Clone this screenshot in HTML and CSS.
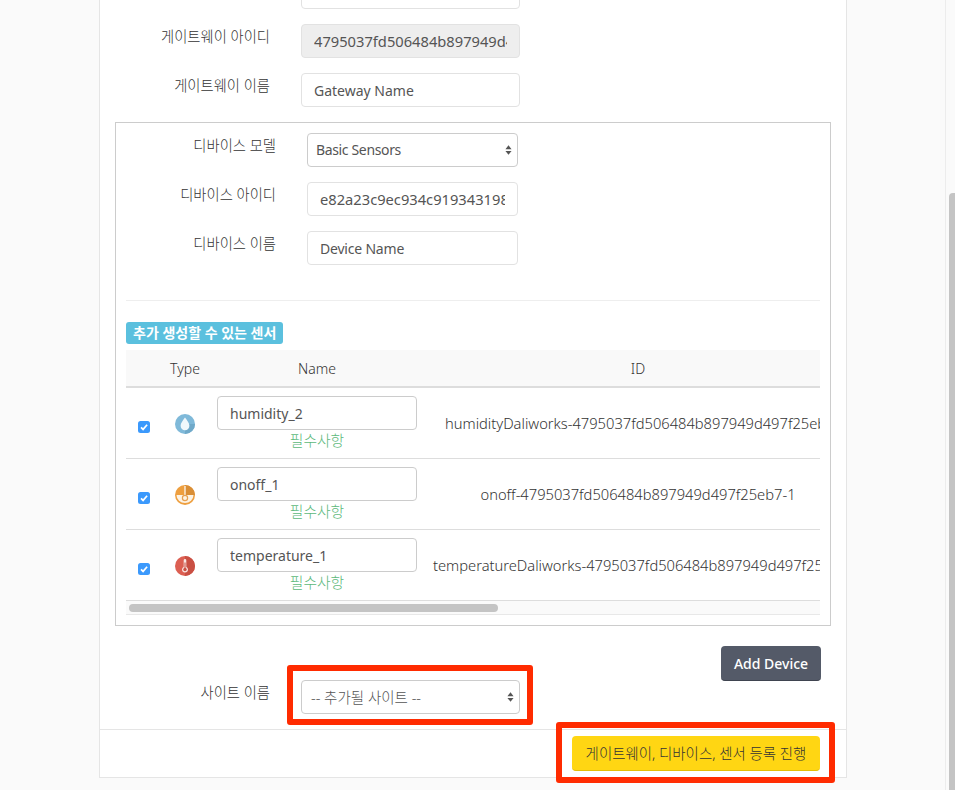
FILE: index.html
```html
<!DOCTYPE html>
<html lang="ko">
<head>
<meta charset="utf-8">
<title>게이트웨이 등록</title>
<link rel="stylesheet" href="styles.css">
</head>
<body>
<div class="page">
  <main class="card">
    <div class="card-body">
      <div class="form-row"><div class="form-label"></div><input class="field" type="text" value=""></div>
      <div class="form-row"><label class="form-label">게이트웨이 아이디</label><input class="field field-readonly field-id" type="text" readonly value="4795037fd506484b897949d497f25eb7"></div>
      <div class="form-row"><label class="form-label">게이트웨이 이름</label><input class="field" type="text" value="Gateway Name"></div>

      <section class="device-box">
        <div class="device-fields">
          <div class="form-row"><label class="form-label">디바이스 모델</label>
            <div class="select-wrap">
              <div class="field select-field">Basic Sensors</div>
              <svg class="select-arrows" width="7" height="12" viewBox="0 0 8 12"><path d="M4 0.5 7.5 5H.5zM4 11.5 .5 7h7z" fill="#555"/></svg>
            </div>
          </div>
          <div class="form-row"><label class="form-label">디바이스 아이디</label><input class="field field-id" type="text" value="e82a23c9ec934c91934319836fa1b2c4"></div>
          <div class="form-row"><label class="form-label">디바이스 이름</label><input class="field field-device-name" type="text" value="Device Name"></div>
        </div>
        <hr class="divider">
        <div class="badge-row"><span class="badge">추가 생성할 수 있는 센서</span></div>
        <div class="table-clip">
          <table class="sensors">
            <colgroup><col class="col-check"><col class="col-type"><col class="col-name"><col class="col-id"></colgroup>
            <thead>
              <tr><th></th><th>Type</th><th>Name</th><th>ID</th></tr>
            </thead>
            <tbody>
              <tr>
                <td class="cell-check"><span class="check"><svg width="12" height="12" viewBox="0 0 12 12"><path d="M3 6.3 5.1 8.4 9.1 3.8" fill="none" stroke="#fff" stroke-width="1.7"/></svg></span></td>
                <td class="cell-icon">
                  <svg width="20" height="20" viewBox="0 0 20 20"><circle cx="10" cy="10" r="10" fill="#7fb9d9"/><path d="M10 10V20A10 10 0 0 0 20 10Z" fill="#6fa9c9"/><path d="M10 3.6C12.4 7 14.4 9.3 14.4 11.8A4.4 4.4 0 0 1 5.6 11.8C5.6 9.3 7.6 7 10 3.6Z" fill="#f1f8fb"/></svg>
                </td>
                <td><input class="field field-name" type="text" value="humidity_2"><div class="required">필수사항</div></td>
                <td class="cell-id cell-id-humidity">humidityDaliworks-4795037fd506484b897949d497f25eb7-2</td>
              </tr>
              <tr>
                <td class="cell-check"><span class="check"><svg width="12" height="12" viewBox="0 0 12 12"><path d="M3 6.3 5.1 8.4 9.1 3.8" fill="none" stroke="#fff" stroke-width="1.7"/></svg></span></td>
                <td class="cell-icon">
                  <svg width="20" height="20" viewBox="0 0 20 20"><circle cx="10" cy="10" r="10" fill="#ee9f3f"/><path d="M10 0A10 10 0 0 1 20 10H10Z" fill="#d98e36"/><path d="M1.5 10H18.5A8.5 8 0 0 1 1.5 10Z" fill="#fdf3e4"/><rect x="9.4" y="1" width="1.2" height="9" fill="#fff"/><circle cx="10" cy="13" r="2.6" fill="none" stroke="#e6a050" stroke-width="1.2"/></svg>
                </td>
                <td><input class="field field-name" type="text" value="onoff_1"><div class="required">필수사항</div></td>
                <td class="cell-id">onoff-4795037fd506484b897949d497f25eb7-1</td>
              </tr>
              <tr>
                <td class="cell-check"><span class="check"><svg width="12" height="12" viewBox="0 0 12 12"><path d="M3 6.3 5.1 8.4 9.1 3.8" fill="none" stroke="#fff" stroke-width="1.7"/></svg></span></td>
                <td class="cell-icon">
                  <svg width="20" height="20" viewBox="0 0 20 20"><circle cx="10" cy="10" r="10" fill="#dc5f52"/><path d="M10 0A10 10 0 0 1 10 20Z" fill="#c94f43"/><path d="M8.7 4.3A1.3 1.3 0 0 1 11.3 4.3V10.9A3 3 0 1 1 8.7 10.9Z" fill="#f9e6e2"/><rect x="9.5" y="6.5" width="1" height="6" fill="#c94f43"/><circle cx="10" cy="13.5" r="1.7" fill="#c94f43"/></svg>
                </td>
                <td><input class="field field-name" type="text" value="temperature_1"><div class="required">필수사항</div></td>
                <td class="cell-id cell-id-temperature">temperatureDaliworks-4795037fd506484b897949d497f25eb7-1</td>
              </tr>
            </tbody>
          </table>
        </div>
        <div class="h-scroll"><div class="h-thumb"></div></div>
      </section>

      <div class="add-row"><button class="btn btn-dark" type="button">Add Device</button></div>

      <div class="form-row form-row-last"><label class="form-label">사이트 이름</label>
        <div class="select-wrap">
          <div class="field select-field select-site">-- 추가될 사이트 --</div>
          <svg class="select-arrows" width="7" height="12" viewBox="0 0 8 12"><path d="M4 0.5 7.5 5H.5zM4 11.5 .5 7h7z" fill="#555"/></svg>
          <span class="mark mark-site"></span>
        </div>
      </div>
    </div>
    <footer class="card-footer">
      <div class="submit-wrap">
        <button class="btn btn-yellow" type="button">게이트웨이, 디바이스, 센서 등록 진행</button>
        <span class="mark mark-submit"></span>
      </div>
    </footer>
  </main>
</div>
<aside class="v-scroll"><div class="v-thumb"></div></aside>
</body>
</html>
```

FILE: styles.css
```css
* { box-sizing: border-box; }
html, body { margin: 0; height: 790px; overflow: hidden; }
body {
  display: flex;
  background: #fafafa;
  color: #333;
  font: 14px/21px "Noto Sans", "Noto Sans CJK KR", sans-serif;
}
.page { flex: 1; padding-left: 99px; }
.v-scroll { width: 10px; height: 790px; border-left: 1px solid #ececec; padding: 193px 0 0 3px; background: #fafafa; }
.v-thumb { height: 597px; background: #c4c4c4; border-radius: 4px 0 0 0; }

.card { width: 748px; margin-top: -41px; background: #fff; border: 1px solid #e5e5e5; }
.card-body { padding: 15px 15px 15px; }

.form-row { display: flex; align-items: flex-start; margin-bottom: 15px; }
.form-row-last { margin-bottom: 0; }
.form-label { width: 155px; margin-right: 31px; text-align: right; font-size: 14.3px; font-weight: 300; color: #333; padding-top: 2px; height: 34px; }

.field {
  display: block;
  width: 219px;
  height: 34px;
  padding: 6px 12px;
  background: #fff;
  border: 1px solid #e2e2e2;
  border-radius: 4px;
  color: #555;
  font: inherit;
  outline: 0;
}
.field-readonly { background: #eee; }
.field-id { font-size: 14.7px; }
.field-device-name { letter-spacing: -0.2px; }

.device-box { border: 1px solid #ccc; padding: 10px; margin-bottom: 20px; }
.device-box .form-label { width: 150px; }
.device-box .field { width: 211px; }
.device-box .form-row:last-child { margin-bottom: 0; }

.select-wrap { position: relative; }
.select-field { border-color: #ccc; padding-left: 8px; letter-spacing: -0.35px; line-height: 20px; }
.select-site { padding-left: 9px; width: 219px; font-size: 14.5px; font-weight: 300; letter-spacing: 0; line-height: 21px; }
.select-arrows { position: absolute; right: 6px; top: 11px; }

.divider { margin: 35px 0 21px; border: 0; border-top: 1px solid #eee; }
.badge-row { height: 22px; margin-bottom: 6px; display: flex; }
.badge {
  background: #5bc0de;
  color: #fff;
  border-radius: 3px;
  font-size: 14px;
  font-weight: 700;
  line-height: 21px;
  padding: 0 7px;
}

.table-clip { overflow: hidden; width: 694px; }
.sensors { width: 725px; table-layout: fixed; border-collapse: collapse; }
.col-check { width: 35px; }
.col-type { width: 48px; }
.col-name { width: 216px; }
.col-id { width: 426px; }
.sensors th {
  height: 37px;
  padding: 0 8px;
  background: #f9f9f9;
  border-bottom: 2px solid #ddd;
  font-weight: 300;
  text-align: center;
}
.sensors td {
  height: 71px;
  padding: 8px 8px 7px;
  border-bottom: 1px solid #ddd;
  text-align: center;
  white-space: nowrap;
  vertical-align: middle;
}
.sensors .cell-check { padding: 8px 0 0 12px; text-align: left; }
.sensors .cell-icon { padding: 2px 0 0; }
.cell-icon svg { display: block; margin: 0 auto; }
.check { display: block; width: 12px; height: 12px; background: #3b99fc; border-radius: 2.5px; }
.check svg { display: block; }
.field.field-name { width: 200px; border-color: #ccc; }
.required { color: #5cb87a; font-size: 14.8px; font-weight: 300; text-align: center; width: 200px; }
.sensors .cell-id { font-size: 14.7px; font-weight: 300; padding: 0; text-align: center; }
.sensors .cell-id-humidity { text-align: left; padding-left: 20px; }
.sensors .cell-id-temperature { text-align: left; padding-left: 8px; }

.h-scroll { height: 14px; padding: 3px; background: #fafafa; border-bottom: 1px solid #e8e8e8; }
.h-thumb { width: 369px; height: 8px; background: #c4c4c4; border-radius: 4px; }

.add-row { display: flex; justify-content: flex-end; padding-right: 10px; margin-bottom: -1px; }

.btn { height: 35px; border-radius: 4px; font: inherit; cursor: pointer; }
.btn-dark { width: 100px; background: #545a68; color: #fff; border: 0; border-bottom: 1px solid #3f4450; font-weight: 500; }
.btn-yellow { width: 248px; background: #ffd613; color: #333; border: 0; border-bottom: 1px solid #e5bd05; font-size: 14.45px; font-weight: 300; padding: 0; }

.card-footer { display: flex; justify-content: flex-end; height: 48px; padding: 6px 26px 0 0; border-top: 1px solid #e5e5e5; }
.submit-wrap { position: relative; height: 35px; }

.mark { position: absolute; border: 6px solid #ff2b00; border-radius: 3px; pointer-events: none; }
.mark-site { top: -15px; bottom: -11px; left: -14px; right: -13px; }
.mark-submit { top: -14px; bottom: -12px; left: -16px; right: -15px; }
```
